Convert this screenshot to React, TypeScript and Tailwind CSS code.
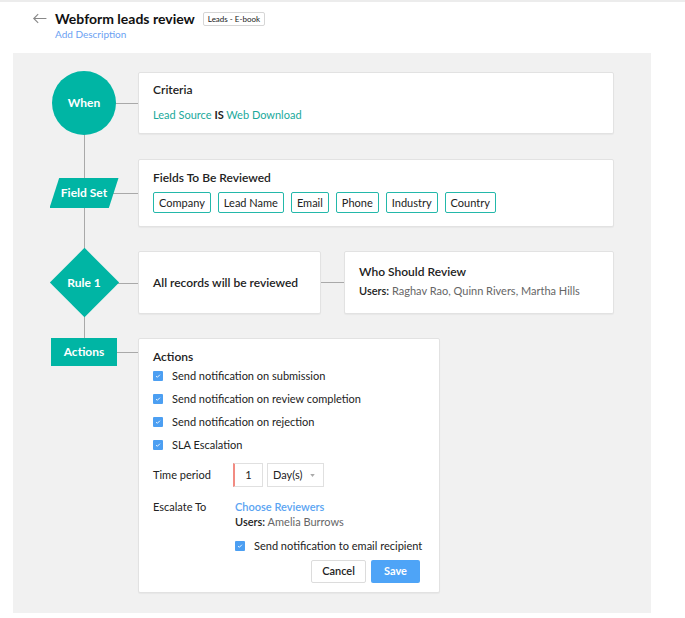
import React from "react";

const TEAL = "bg-[#00b5a4]";

function Check() {
  return (
    <span className="flex h-[10px] w-[10px] shrink-0 items-center justify-center rounded-[1px] bg-[#4c9ff2]">
      <svg viewBox="0 0 10 10" className="h-[8px] w-[8px]">
        <path d="M2.6 5.2 L4.2 6.6 L7.4 3.4" fill="none" stroke="#fff" strokeWidth="1.1" />
      </svg>
    </span>
  );
}

function Card({ className = "", children }: { className?: string; children: React.ReactNode }) {
  return (
    <div className={`rounded-[2px] border border-[#e2e2e2] bg-white shadow-[0_1px_1px_rgba(0,0,0,0.04)] ${className}`}>
      {children}
    </div>
  );
}

// shape on the left spine, with its connector running right to the card
function Node({ children, top }: { children: React.ReactNode; top?: boolean }) {
  return (
    <div className={`relative flex w-[125px] shrink-0 ${top ? "items-start" : "items-center"}`}>
      <div className={`absolute left-[71px] right-0 h-px bg-[#a9a9a9] ${top ? "top-[14px]" : "top-1/2"}`} />
      <div className={`relative z-10 ml-[28px] flex w-[86px] items-center justify-center ${top ? "" : "h-0"}`}>
        {children}
      </div>
    </div>
  );
}

const fields = ["Company", "Lead Name", "Email", "Phone", "Industry", "Country"];
const actions = [
  "Send notification on submission",
  "Send notification on review completion",
  "Send notification on rejection",
  "SLA Escalation",
];

export default function App() {
  return (
    <div className="min-h-[618px] bg-white text-[#222] [font-family:Lato,'Noto_Sans',sans-serif]">
      <div className="h-[2px] bg-[#ececec]" />
      <header className="flex items-start pl-[32px] pt-[7px]">
        <svg viewBox="0 0 16 12" className="mt-[4px] h-[11px] w-[16px]">
          <path d="M15 6 H1.5 M6 1.2 L1.2 6 L6 10.8" fill="none" stroke="#888" strokeWidth="1.2" />
        </svg>
        <div className="ml-[7px]">
          <div className="flex h-[19px] items-center">
            <h1 className="text-[14px] font-bold leading-[19px] text-[#111]">Webform leads review</h1>
            <span className="ml-[8px] rounded-[2px] border border-[#d6d6d6] px-[4px] text-[8px] leading-[12px] text-[#222]">
              Leads - E-book
            </span>
          </div>
          <div className="text-[10px] leading-[13px] text-[#6aa1f2]">Add Description</div>
        </div>
      </header>

      <div className="relative mx-[13px] mt-[12px] w-[638px] bg-[#f1f1f1] pb-[20px] pt-[19px]">
        <div className="absolute left-[71px] top-[49px] h-[250px] w-px bg-[#a9a9a9]" />

        <div className="relative flex">
          <Node>
            <div className={`flex h-[64px] w-[64px] shrink-0 items-center justify-center rounded-full ${TEAL} text-[12px] font-bold text-white`}>
              When
            </div>
          </Node>
          <Card className="h-[62px] w-[476px] px-[14px] pt-[9px]">
            <div className="text-[12px] font-semibold leading-[16px]">Criteria</div>
            <div className="mt-[10px] text-[11px] leading-[14px]">
              <span className="text-[#1aa99b]">Lead Source</span> <span className="font-bold">IS</span>{" "}
              <span className="text-[#1aa99b]">Web Download</span>
            </div>
          </Card>
        </div>

        <div className="relative mt-[25px] flex">
          <Node>
            <div className={`flex h-[30px] w-[69px] shrink-0 items-center justify-center ${TEAL} text-[12px] font-bold text-white [clip-path:polygon(14%_0,100%_0,86%_100%,0_100%)]`}>
              Field Set
            </div>
          </Node>
          <Card className="h-[68px] w-[476px] px-[14px] pt-[10px]">
            <div className="text-[12px] font-semibold leading-[16px]">Fields To Be Reviewed</div>
            <div className="mt-[6px] flex gap-[7px]">
              {fields.map((f) => (
                <span key={f} className="rounded-[2px] border border-[#23b8aa] bg-white px-[5px] text-[11px] leading-[19px]">
                  {f}
                </span>
              ))}
            </div>
          </Card>
        </div>

        <div className="relative mt-[24px] flex">
          <Node>
            <div className="relative flex h-[70px] w-[70px] shrink-0 items-center justify-center">
              <div className={`absolute h-[49px] w-[49px] rotate-45 ${TEAL}`} />
              <span className="relative text-[12px] font-bold text-white">Rule 1</span>
            </div>
          </Node>
          <div className="flex items-center">
            <Card className="flex h-[63px] w-[183px] items-center px-[14px]">
              <span className="text-[12px] font-semibold">All records will be reviewed</span>
            </Card>
            <div className="h-px w-[23px] bg-[#a9a9a9]" />
            <Card className="h-[63px] w-[270px] px-[14px] pt-[12px]">
              <div className="text-[12px] font-semibold leading-[16px]">Who Should Review</div>
              <div className="mt-[4px] text-[11px] leading-[14px] text-[#666]">
                <span className="font-semibold text-[#222]">Users:</span> Raghav Rao, Quinn Rivers, Martha Hills
              </div>
            </Card>
          </div>
        </div>

        <div className="relative mt-[24px] flex">
          <Node top>
            <div className={`flex h-[28px] w-[66px] items-center justify-center ${TEAL} text-[12px] font-bold text-white`}>
              Actions
            </div>
          </Node>
          <Card className="w-[302px] px-[14px] pb-[9px] pt-[10px]">
            <div className="text-[12px] font-semibold leading-[16px]">Actions</div>
            <div className="mt-[3px] flex flex-col gap-[7px]">
              {actions.map((a) => (
                <div key={a} className="flex items-center gap-[9px] text-[11px] leading-[16px]">
                  <Check />
                  <span>{a}</span>
                </div>
              ))}
            </div>
            <div className="mt-[10px] flex items-center">
              <span className="w-[80px] text-[11px]">Time period</span>
              <div className="flex h-[24px] w-[30px] items-center justify-center border border-[#e0e0e0] border-l-[#f28b82] border-l-2 bg-white text-[11px]">
                1
              </div>
              <div className="ml-[4px] flex h-[24px] w-[57px] items-center border border-[#e0e0e0] bg-white pl-[5px] text-[11px]">
                Day(s)
                <svg viewBox="0 0 6 4" className="ml-[8px] h-[3px] w-[5px]">
                  <path d="M0 0 H6 L3 4 Z" fill="#aaa" />
                </svg>
              </div>
            </div>
            <div className="mt-[12px] flex">
              <span className="w-[82px] text-[11px] leading-[15px]">Escalate To</span>
              <div>
                <div className="text-[11px] font-semibold leading-[15px] text-[#5aa4f2]">Choose Reviewers</div>
                <div className="text-[11px] leading-[15px] text-[#666]">
                  <span className="font-semibold text-[#222]">Users:</span> Amelia Burrows
                </div>
                <div className="mt-[9px] flex items-center gap-[9px] text-[11px] leading-[16px]">
                  <Check />
                  <span>Send notification to email recipient</span>
                </div>
              </div>
            </div>
            <div className="mt-[6px] flex justify-end gap-[5px] pr-[5px]">
              <button className="h-[23px] w-[55px] rounded-[2px] border border-[#dcdcdc] bg-white text-[11px] font-semibold">
                Cancel
              </button>
              <button className="h-[23px] w-[49px] rounded-[2px] bg-[#4ea4f7] text-[11px] font-bold text-white">
                Save
              </button>
            </div>
          </Card>
        </div>
      </div>
    </div>
  );
}
